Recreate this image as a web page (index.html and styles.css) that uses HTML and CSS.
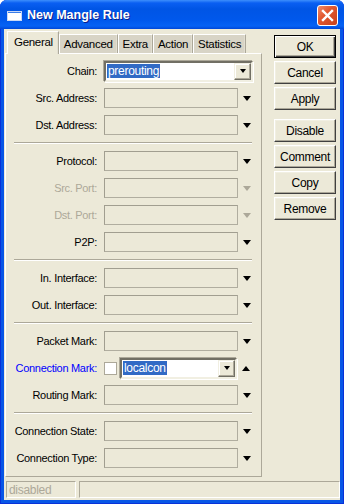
FILE: index.html
```html
<!DOCTYPE html>
<html lang="en">
<head>
    <meta charset="UTF-8">
    <title>New Mangle Rule</title>
    <link rel="stylesheet" href="styles.css">
</head>
<body>
    <div class="window">
        <div class="titlebar">
            <svg class="title-icon" width="15" height="10" viewBox="0 0 15 10">
                <rect x="0" y="0" width="15" height="10" fill="#ffffff"/>
                <rect x="0" y="0" width="15" height="2" fill="#3a7de8"/>
                <rect x="0.5" y="0.5" width="14" height="9" fill="none" stroke="#c9d8f5"/>
            </svg>
            <span class="title">New Mangle Rule</span>
            <div class="close">
                <svg width="13" height="13" viewBox="0 0 13 13">
                    <path d="M2 2 L11 11 M11 2 L2 11" stroke="#ffffff" stroke-width="2.4" stroke-linecap="square"/>
                </svg>
            </div>
        </div>
        <div class="client">
            <div class="main">
                <div class="tab-area">
                    <div class="tabs">
                        <div class="tab active">General</div>
                        <div class="tab">Advanced</div>
                        <div class="tab">Extra</div>
                        <div class="tab">Action</div>
                        <div class="tab">Statistics</div>
                    </div>
                    <div class="panel">
                        <div class="row">
                            <label>Chain:</label>
                            <div class="combo chain">
                                <span class="sel">prerouting</span>
                                <div class="drop"><span class="tri"></span></div>
                            </div>
                        </div>
                        <div class="row">
                            <label>Src. Address:</label>
                            <div class="field"></div>
                            <div class="arrow"><span class="tri"></span></div>
                        </div>
                        <div class="row">
                            <label>Dst. Address:</label>
                            <div class="field"></div>
                            <div class="arrow"><span class="tri"></span></div>
                        </div>
                        <div class="sep"></div>
                        <div class="row">
                            <label>Protocol:</label>
                            <div class="field"></div>
                            <div class="arrow"><span class="tri"></span></div>
                        </div>
                        <div class="row disabled">
                            <label>Src. Port:</label>
                            <div class="field"></div>
                            <div class="arrow"><span class="tri"></span></div>
                        </div>
                        <div class="row disabled">
                            <label>Dst. Port:</label>
                            <div class="field"></div>
                            <div class="arrow"><span class="tri"></span></div>
                        </div>
                        <div class="row">
                            <label>P2P:</label>
                            <div class="field"></div>
                            <div class="arrow"><span class="tri"></span></div>
                        </div>
                        <div class="sep"></div>
                        <div class="row">
                            <label>In. Interface:</label>
                            <div class="field"></div>
                            <div class="arrow"><span class="tri"></span></div>
                        </div>
                        <div class="row">
                            <label>Out. Interface:</label>
                            <div class="field"></div>
                            <div class="arrow"><span class="tri"></span></div>
                        </div>
                        <div class="sep"></div>
                        <div class="row">
                            <label>Packet Mark:</label>
                            <div class="field"></div>
                            <div class="arrow"><span class="tri"></span></div>
                        </div>
                        <div class="row">
                            <label class="blue">Connection Mark:</label>
                            <div class="check"></div>
                            <div class="combo mark">
                                <span class="sel">localcon</span>
                                <div class="drop"><span class="tri"></span></div>
                            </div>
                            <div class="arrow"><span class="tri up"></span></div>
                        </div>
                        <div class="row">
                            <label>Routing Mark:</label>
                            <div class="field"></div>
                            <div class="arrow"><span class="tri"></span></div>
                        </div>
                        <div class="sep"></div>
                        <div class="row">
                            <label>Connection State:</label>
                            <div class="field"></div>
                            <div class="arrow"><span class="tri"></span></div>
                        </div>
                        <div class="row">
                            <label>Connection Type:</label>
                            <div class="field"></div>
                            <div class="arrow"><span class="tri"></span></div>
                        </div>
                    </div>
                </div>
                <div class="buttons">
                    <div class="btn default">OK</div>
                    <div class="btn">Cancel</div>
                    <div class="btn">Apply</div>
                    <div class="btn spaced">Disable</div>
                    <div class="btn">Comment</div>
                    <div class="btn">Copy</div>
                    <div class="btn">Remove</div>
                </div>
            </div>
            <div class="statusbar">
                <div class="status first">disabled</div>
                <div class="status rest"></div>
            </div>
        </div>
    </div>
</body>
</html>
```

FILE: styles.css
```css
* {
    box-sizing: border-box;
}
body {
    margin: 0;
    background: #ffffff;
    font-family: "Liberation Sans", Arial, sans-serif;
    font-size: 11px;
    letter-spacing: -0.3px;
    color: #000000;
}
.window {
    width: 344px;
    height: 504px;
    display: flex;
    flex-direction: column;
    background: #0856e6;
    border-radius: 7px 7px 0 0;
    overflow: hidden;
    box-shadow: inset 1px 0 #0831d9, inset -1px 0 #0831d9, inset 0 -1px #0831d9;
}
.titlebar {
    height: 29px;
    flex: none;
    display: flex;
    align-items: center;
    padding: 1px 7px 0 7px;
    background: linear-gradient(#3d8ffc 0, #0a5ff2 3px, #0055e5 9px, #0058ec 20px, #0662f4 26px, #0047d8 29px);
}
.title-icon {
    margin-right: 5px;
    margin-top: 1px;
}
.title {
    flex: 1;
    color: #ffffff;
    font-weight: bold;
    font-size: 12.5px;
    letter-spacing: 0;
    text-shadow: 1px 1px #0a1e8c;
}
.close {
    width: 21px;
    height: 21px;
    margin-right: -1px;
    margin-top: 1px;
    border: 1px solid #ffffff;
    border-radius: 3px;
    background: linear-gradient(135deg, #f08d6c 0%, #e2582f 40%, #c8401c 100%);
    display: flex;
    align-items: center;
    justify-content: center;
}
.client {
    flex: 1;
    margin: 0 4px 4px 4px;
    background: #ece9d8;
    display: flex;
    flex-direction: column;
    padding: 2px 0 0 1px;
}
.main {
    display: flex;
}
.tab-area {
    width: 257px;
    display: flex;
    flex-direction: column;
}
.tabs {
    display: flex;
    height: 22px;
    padding-left: 2px;
    align-items: flex-end;
}
.tab {
    height: 20px;
    padding: 0 4px;
    display: flex;
    align-items: center;
    font-size: 11.5px;
    background: #d8d4c6;
    border: 1px solid;
    border-color: #ffffff #aca899 transparent #ffffff;
    box-shadow: inset -1px 0 #e2dfd2;
    margin-bottom: -1px;
}
.tab.active {
    height: 23px;
    padding: 0 5px 2px 6px;
    background: #ece9d8;
    position: relative;
    z-index: 1;
    border-bottom: none;
    margin-bottom: -1px;
}
.panel {
    height: 424px;
    border: 1px solid;
    border-color: #ffffff #aca899 #aca899 #ffffff;
    padding-top: 7px;
    display: flex;
    flex-direction: column;
    gap: 7px;
}
.row {
    display: flex;
    align-items: center;
    height: 20px;
}
.row label {
    width: 91px;
    margin-right: 7px;
    text-align: right;
    white-space: nowrap;
}
.row label.blue {
    color: #0000ff;
}
.row.disabled label {
    color: #aca899;
}
.field {
    width: 134px;
    height: 20px;
    border: 1px solid #b0ad9f;
    border-top-color: #a19e90;
    border-left-color: #a19e90;
}
.arrow {
    width: 14px;
    padding-left: 5px;
    display: flex;
    align-items: center;
}
.tri {
    width: 0;
    height: 0;
    border-left: 4px solid transparent;
    border-right: 4px solid transparent;
    border-top: 5px solid #000000;
}
.tri.up {
    border-top: none;
    border-bottom: 5px solid #000000;
}
.row.disabled .tri {
    border-top-color: #aca899;
}
.combo {
    height: 21px;
    background: #ffffff;
    border: 2px solid;
    border-color: #716f64 #f1efe2 #f1efe2 #716f64;
    box-shadow: -1px -1px #aca899, 1px 1px #ffffff;
    display: flex;
    align-items: center;
    padding-left: 1px;
    justify-content: space-between;
    font-size: 12px;
}
.combo.chain {
    width: 149px;
}
.combo.mark {
    width: 117px;
}
.sel {
    background: #316ac5;
    color: #ffffff;
    padding: 0 1px;
    line-height: 14px;
}
.drop {
    width: 17px;
    height: 17px;
    background: #ece9d8;
    border: 1px solid;
    border-color: #f1efe2 #716f64 #716f64 #f1efe2;
    box-shadow: inset -1px -1px #aca899, inset 1px 1px #ffffff;
    display: flex;
    align-items: center;
    justify-content: center;
}
.drop .tri {
    border-left-width: 3.5px;
    border-right-width: 3.5px;
    border-top-width: 4px;
}
.check {
    width: 13px;
    height: 13px;
    background: #ffffff;
    border: 1px solid #aca899;
    margin-right: 2px;
}
.row .check + .combo {
    margin-left: 1px;
}
.sep {
    height: 2px;
    margin-left: 8px;
    width: 238px;
    border-top: 1px solid #aca899;
    border-bottom: 1px solid #ffffff;
}
.buttons {
    width: 62px;
    margin-left: 12px;
    margin-top: 4px;
    display: flex;
    flex-direction: column;
    gap: 3px;
}
.btn {
    height: 23px;
    display: flex;
    align-items: center;
    justify-content: center;
    font-size: 12px;
    background: #ece9d8;
    border: 1px solid;
    border-color: #ffffff #404040 #404040 #ffffff;
    box-shadow: inset -1px -1px #aca899, inset 1px 1px #f1efe2;
}
.btn.default {
    border-color: #000000;
    box-shadow: inset 1px 1px #ffffff, inset -1px -1px #404040, inset -2px -2px #aca899;
}
.btn.spaced {
    margin-top: 6px;
}
.statusbar {
    display: flex;
    gap: 3px;
    margin-top: 4px;
    padding-left: 1px;
    height: 17px;
}
.status {
    border: 1px solid;
    border-color: #aca899 #ffffff #ffffff #aca899;
    color: #aca899;
    padding-left: 2px;
    display: flex;
    align-items: center;
    font-size: 12px;
}
.status.first {
    width: 70px;
}
.status.rest {
    flex: 1;
}
```
